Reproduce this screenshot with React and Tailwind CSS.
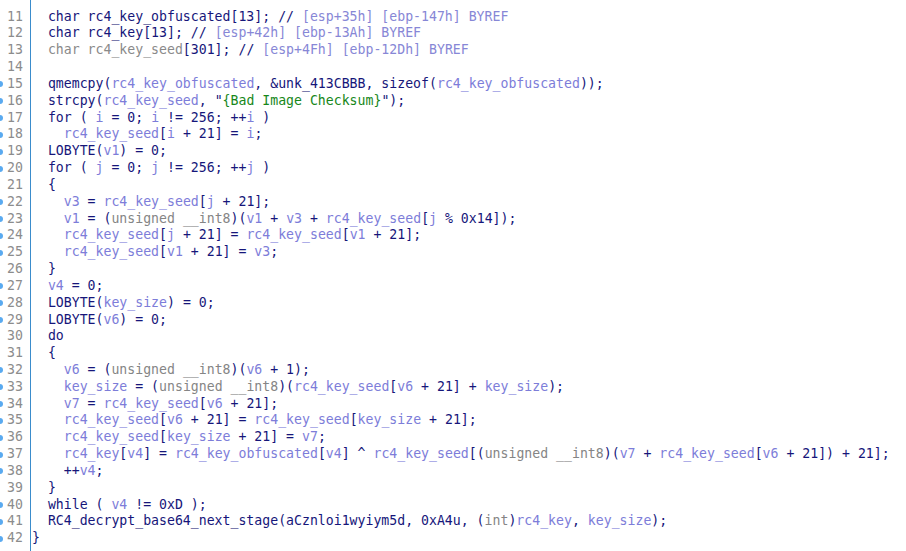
import React from 'react';

// segments: "|" splits, prefix $ = variable, ~ = type (gray), % = string, # = comment, ! = dim gray
const lines = [
  { n: 11, dot: false, code: '  char rc4_key_obfuscated[13]; // |#[esp+35h] [ebp-147h] BYREF' },
  { n: 12, dot: false, code: '  char rc4_key[13]; // |#[esp+42h] [ebp-13Ah] BYREF' },
  { n: 13, dot: false, code: '|!  char rc4_key_seed|[301]; // |#[esp+4Fh] [ebp-12Dh] BYREF' },
  { n: 14, dot: false, code: '' },
  { n: 15, dot: true, code: '  qmemcpy(|$rc4_key_obfuscated|, &unk_413CBBB, sizeof(|$rc4_key_obfuscated|));' },
  { n: 16, dot: true, code: '  strcpy(|$rc4_key_seed|, "|%{Bad Image Checksum}|");' },
  { n: 17, dot: true, code: '  for ( |$i| = 0; |$i| != 256; ++|$i| )' },
  { n: 18, dot: true, code: '    |$rc4_key_seed|[|$i| + 21] = |$i|;' },
  { n: 19, dot: true, code: '  LOBYTE(|$v1|) = 0;' },
  { n: 20, dot: true, code: '  for ( |$j| = 0; |$j| != 256; ++|$j| )' },
  { n: 21, dot: false, code: '  {' },
  { n: 22, dot: true, code: '    |$v3| = |$rc4_key_seed|[|$j| + 21];' },
  { n: 23, dot: true, code: '    |$v1| = (|~unsigned __int8|)(|$v1| + |$v3| + |$rc4_key_seed|[|$j| % 0x14]);' },
  { n: 24, dot: true, code: '    |$rc4_key_seed|[|$j| + 21] = |$rc4_key_seed|[|$v1| + 21];' },
  { n: 25, dot: true, code: '    |$rc4_key_seed|[|$v1| + 21] = |$v3|;' },
  { n: 26, dot: false, code: '  }' },
  { n: 27, dot: true, code: '  |$v4| = 0;' },
  { n: 28, dot: true, code: '  LOBYTE(|$key_size|) = 0;' },
  { n: 29, dot: true, code: '  LOBYTE(|$v6|) = 0;' },
  { n: 30, dot: false, code: '  do' },
  { n: 31, dot: false, code: '  {' },
  { n: 32, dot: true, code: '    |$v6| = (|~unsigned __int8|)(|$v6| + 1);' },
  { n: 33, dot: true, code: '    |$key_size| = (|~unsigned __int8|)(|$rc4_key_seed|[|$v6| + 21] + |$key_size|);' },
  { n: 34, dot: true, code: '    |$v7| = |$rc4_key_seed|[|$v6| + 21];' },
  { n: 35, dot: true, code: '    |$rc4_key_seed|[|$v6| + 21] = |$rc4_key_seed|[|$key_size| + 21];' },
  { n: 36, dot: true, code: '    |$rc4_key_seed|[|$key_size| + 21] = |$v7|;' },
  { n: 37, dot: true, code: '    |$rc4_key|[|$v4|] = |$rc4_key_obfuscated|[|$v4|] ^ |$rc4_key_seed|[(|~unsigned __int8|)(|$v7| + |$rc4_key_seed|[|$v6| + 21]) + 21];' },
  { n: 38, dot: true, code: '    ++|$v4|;' },
  { n: 39, dot: false, code: '  }' },
  { n: 40, dot: true, code: '  while ( |$v4| != 0xD );' },
  { n: 41, dot: true, code: '  RC4_decrypt_base64_next_stage(aCznloi1wyiym5d, 0xA4u, (|~int|)|$rc4_key|, |$key_size|);' },
  { n: 42, dot: true, code: '}' },
];

const tone = {
  '$': 'text-[#7d7dd9]',
  '~': 'text-[#858585]',
  '!': 'text-[#8a8a8a]',
  '%': 'text-[#17871a]',
  '#': 'text-[#8787d6]',
};

const CodeLine = ({ code }) => {
  const parts = code.split('|').filter((p) => p.length);
  return (
    <div className="h-[16.84px] whitespace-pre">
      {parts.map((p, i) =>
        tone[p[0]] ? (
          <span key={i} className={tone[p[0]]}>{p.slice(1)}</span>
        ) : (
          <span key={i}>{p}</span>
        )
      )}
    </div>
  );
};

export default function App() {
  return (
    <div
      className="h-screen w-full overflow-hidden bg-white flex text-[13.2px] leading-[16.84px] text-[#16167a]"
      style={{ fontFamily: '"DejaVu Sans Mono", "Liberation Mono", monospace' }}
    >
      <div className="w-[31px] shrink-0 h-full border-r border-[#3a8ccc] pt-[8.6px]">
        {lines.map((l) => (
          <div key={l.n} className="relative h-[16.84px] text-right pr-[7px] text-[#8c8c8c]">
            {l.dot && (
              <span className="absolute left-[-3px] top-[5.5px] w-[6px] h-[6px] rounded-full bg-[#5aaaf0]"></span>
            )}
            {l.n}
          </div>
        ))}
      </div>
      <div className="flex-1 pt-[8.6px] pl-[1px]">
        {lines.map((l) => (
          <CodeLine key={l.n} code={l.code} />
        ))}
      </div>
    </div>
  );
}
